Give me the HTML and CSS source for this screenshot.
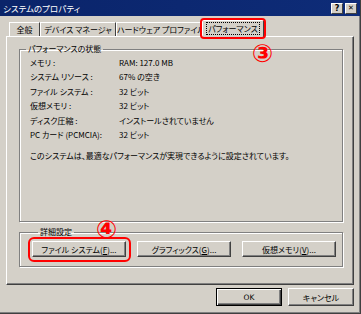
FILE: index.html
```html
<!DOCTYPE html>
<html lang="ja">
<head>
<meta charset="utf-8">
<link rel="stylesheet" href="styles.css">
</head>
<body>
<div class="window">
  <div class="titlebar">
    <span class="title">システムのプロパティ</span>
    <span class="tbtns">
      <span class="tbtn">?</span>
      <span class="tbtn x">✕</span>
    </span>
  </div>
  <div class="body">
    <div class="tabs">
      <div class="tab">全般</div>
      <div class="tab">デバイス マネージャ</div>
      <div class="tab">ハードウェア プロファイル</div>
      <div class="tab active"><span class="focus">パフォーマンス</span></div>
    </div>
    <div class="panel">
      <span class="mark m3">③</span>
      <fieldset class="group status">
        <legend>パフォーマンスの状態</legend>
        <div class="inner">
          <div class="rows">
            <span>メモリ :</span><span>RAM: 127.0 MB</span>
            <span>システム リソース :</span><span>67% の空き</span>
            <span>ファイル システム :</span><span>32 ビット</span>
            <span>仮想メモリ :</span><span>32 ビット</span>
            <span>ディスク圧縮 :</span><span>インストールされていません</span>
            <span>PC カード (PCMCIA):</span><span>32 ビット</span>
          </div>
          <p class="msg">このシステムは、最適なパフォーマンスが実現できるように設定されています。</p>
        </div>
      </fieldset>
      <span class="mark m4">④</span>
      <fieldset class="group adv">
        <legend>詳細設定</legend>
        <div class="btnrow">
          <button class="btn ring">ファイル システム(<u>F</u>)...</button>
          <button class="btn">グラフィックス(<u>G</u>)...</button>
          <button class="btn">仮想メモリ(<u>V</u>)...</button>
        </div>
      </fieldset>
    </div>
    <div class="footer">
      <button class="btn okbtn">OK</button>
      <button class="btn cancel">キャンセル</button>
    </div>
  </div>
</div>
</body>
</html>
```
FILE: styles.css
```css
html, body {
  margin: 0;
  padding: 0;
}
body {
  width: 361px;
  height: 314px;
  overflow: hidden;
  background: #d4d0c8;
  font-family: "Noto Sans CJK JP", "Noto Sans", sans-serif;
  font-size: 8px;
  font-feature-settings: "palt";
  color: #000;
}
.window {
  box-sizing: border-box;
  width: 361px;
  height: 314px;
  border-right: 1px solid #404040;
  border-bottom: 1px solid #404040;
  box-shadow: inset -1px -1px 0 #808080;
}
.titlebar {
  height: 16px;
  background: linear-gradient(90deg, #0a246a 0%, #0e2c78 100%);
  display: flex;
  align-items: center;
  justify-content: space-between;
  padding: 0 3px 0 3px;
}
.title {
  color: #fff;
  font-size: 8.5px;
  line-height: 16px;
}
.tbtns {
  display: flex;
  gap: 2px;
}
.tbtn {
  box-sizing: border-box;
  width: 12px;
  height: 11px;
  background: #d4d0c8;
  border-top: 1px solid #fff;
  border-left: 1px solid #fff;
  border-right: 1px solid #404040;
  border-bottom: 1px solid #404040;
  font-family: "DejaVu Sans", sans-serif;
  font-weight: bold;
  font-size: 8px;
  line-height: 9px;
  text-align: center;
  color: #000;
}
.tbtn.x {
  font-size: 7px;
}
.body {
  padding: 6px 0 0 6px;
}
.tabs {
  display: flex;
  align-items: flex-end;
  height: 14px;
  padding-left: 3px;
  position: relative;
  z-index: 1;
}
.tab {
  box-sizing: border-box;
  height: 14px;
  line-height: 13px;
  border-left: 1px solid #fff;
  border-top: 1px solid #fff;
  border-right: 1px solid #404040;
  white-space: nowrap;
  text-align: center;
}
.tab:nth-child(1) { width: 31px; }
.tab:nth-child(2) { width: 76px; }
.tab:nth-child(3) { width: 85px; }
.tab.active {
  height: 17px;
  width: 62px;
  margin-left: 1px;
  line-height: 15px;
  background: #d4d0c8;
  margin-bottom: -1px;
  position: relative;
}
.tab.active::after {
  content: "";
  position: absolute;
  left: -3px;
  top: -3px;
  right: -3px;
  bottom: -2px;
  border: 2px solid #ff0000;
  border-radius: 4px;
}
.focus {
  outline: 1px dotted #000;
  outline-offset: 0;
  padding: 0 1px;
}
.panel {
  position: relative;
  box-sizing: border-box;
  width: 348px;
  height: 249px;
  border-top: 1px solid #fff;
  border-left: 1px solid #fff;
  border-right: 1px solid #404040;
  border-bottom: 1px solid #404040;
  box-shadow: inset -1px -1px 0 #808080;
  padding: 6px 10px 0 12px;
}
.group {
  margin: 0;
  padding: 0;
  border: 1px solid #808080;
  box-shadow: 1px 1px 0 #fff, inset 1px 1px 0 #fff;
}
.group legend {
  padding: 0 2px;
  margin-left: 6px;
  line-height: 12px;
}
.status {
  height: 179px;
  box-sizing: border-box;
}
.inner {
  padding: 1px 0 0 10px;
}
.rows {
  display: grid;
  grid-template-columns: 89px auto;
  line-height: 14.4px;
}
.msg {
  margin: 7px 0 0 0;
  line-height: 14px;
}
.adv {
  margin-top: 4px;
  height: 41px;
  box-sizing: border-box;
  padding: 3px 0 0 12px;
}
.btnrow {
  display: flex;
  gap: 11px;
}
.btn {
  box-sizing: border-box;
  font-family: inherit;
  font-size: 8px;
  font-feature-settings: "palt";
  background: #d4d0c8;
  color: #000;
  border-top: 1px solid #fff;
  border-left: 1px solid #fff;
  border-right: 1px solid #404040;
  border-bottom: 1px solid #404040;
  box-shadow: inset -1px -1px 0 #808080;
  border-radius: 0;
  padding: 0;
  margin: 0;
  height: 16px;
  width: 94px;
  line-height: 13px;
}
.btn.ring {
  position: relative;
}
.btn.ring::after {
  content: "";
  position: absolute;
  left: -5px;
  top: -5px;
  right: -6px;
  bottom: -6px;
  border: 2px solid #ff0000;
  border-radius: 6px;
}
.footer {
  display: flex;
  justify-content: flex-end;
  gap: 6px;
  padding: 3px 6px 0 0;
}
.okbtn, .cancel {
  width: 66px;
  height: 18px;
}
.okbtn {
  border: 1px solid #000;
  box-shadow: inset 1px 1px 0 #fff, inset -1px -1px 0 #404040, inset -2px -2px 0 #808080;
  font-family: "DejaVu Sans", sans-serif;
  font-size: 7.5px;
}
.mark {
  position: absolute;
  color: #ff0000;
  font-family: "DejaVu Sans", sans-serif;
  font-weight: bold;
  font-size: 25px;
  line-height: 25px;
  z-index: 2;
}
.m3 { left: 245px; top: 4px; }
.m4 { left: 89px; top: 180px; }
```
